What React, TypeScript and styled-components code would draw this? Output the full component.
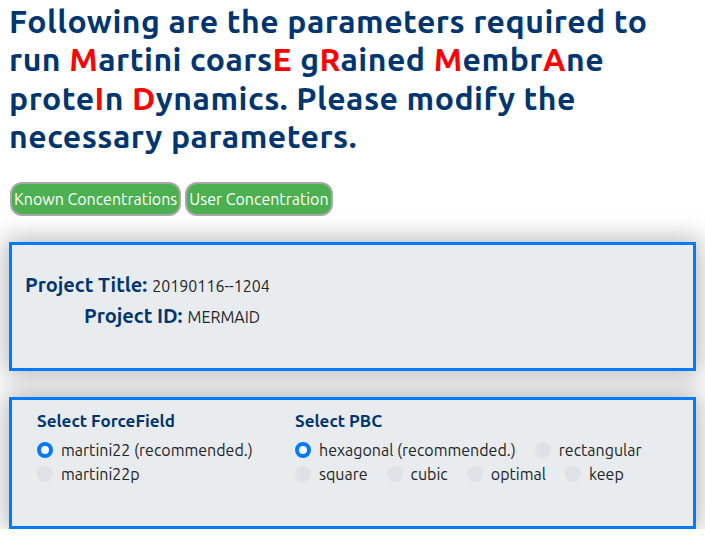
import React from "react";
import styled, { createGlobalStyle } from "styled-components";

const Global = createGlobalStyle`
  html, body { margin: 0; padding: 0; background: #fff; }
  body { font-family: Ubuntu, "Open Sans", "DejaVu Sans", sans-serif; color: #212529; }
`;

const Page = styled.div`
  padding: 2px 9px 0 9px;
  width: 705px;
  box-sizing: border-box;
`;

const Heading = styled.h1`
  margin: 0;
  font-size: 32px;
  line-height: 38.4px;
  font-weight: 700;
  letter-spacing: 0.5px;
  color: #003670;
`;

const Red = styled.span`
  color: #ff0000;
`;

const ButtonRow = styled.div`
  display: flex;
  gap: 4px;
  margin: 26px 0 0 1px;
`;

const PillButton = styled.button`
  font-family: inherit;
  font-size: 16px;
  color: #fff;
  background: #4caf50;
  border: 2px solid #a8a8a8;
  border-radius: 12px;
  height: 34px;
  padding: 0 2px;
  line-height: 28px;
`;

const Card = styled.div<{ $h: number }>`
  box-sizing: border-box;
  height: ${(p) => p.$h}px;
  background: #e9ecef;
  border: 3px solid #007bff;
  box-shadow: 0 0 24px 4px rgba(0, 0, 0, 0.28);
`;

const Cards = styled.div`
  display: flex;
  flex-direction: column;
  gap: 26px;
  margin-top: 26px;
`;

const InfoCard = styled(Card)`
  padding: 28px 0 0 13px;
`;

const InfoRow = styled.div<{ $indent: number }>`
  padding-left: ${(p) => p.$indent}px;
  height: 31px;
  display: flex;
  align-items: baseline;
  gap: 5px;
`;

const InfoLabel = styled.span`
  font-size: 20px;
  font-weight: 700;
  color: #003670;
`;

const InfoValue = styled.span`
  font-size: 16px;
  color: #212529;
`;

const OptionsCard = styled(Card)`
  display: flex;
  padding: 10px 0 0 25px;
`;

const Column = styled.div<{ $w: number }>`
  width: ${(p) => p.$w}px;
`;

const GroupTitle = styled.div`
  font-size: 17px;
  font-weight: 700;
  color: #003670;
  line-height: 22px;
  margin-bottom: 6px;
`;

const RadioWrap = styled.div`
  display: flex;
  flex-wrap: wrap;
  column-gap: 19px;
`;

const RadioItem = styled.label`
  display: flex;
  align-items: center;
  gap: 8px;
  font-size: 16px;
  line-height: 24px;
  color: #212529;
`;

const Dot = styled.span<{ $on?: boolean }>`
  box-sizing: border-box;
  width: 16px;
  height: 16px;
  border-radius: 50%;
  background: ${(p) => (p.$on ? "#fff" : "#dee2e6")};
  border: ${(p) => (p.$on ? "4px solid #007bff" : "none")};
`;

const Radio = ({ label, on }: { label: string; on?: boolean }) => (
  <RadioItem>
    <Dot $on={on} />
    {label}
  </RadioItem>
);

export default function App() {
  return (
    <Page>
      <Global />
      <Heading>
        Following are the parameters required to run <Red>M</Red>artini coars
        <Red>E</Red> g<Red>R</Red>ained <Red>M</Red>embr<Red>A</Red>ne prote
        <Red>I</Red>n <Red>D</Red>ynamics. Please modify the necessary
        parameters.
      </Heading>
      <ButtonRow>
        <PillButton>Known Concentrations</PillButton>
        <PillButton>User Concentration</PillButton>
      </ButtonRow>
      <Cards>
        <InfoCard $h={129}>
          <InfoRow $indent={0}>
            <InfoLabel>Project Title:</InfoLabel>
            <InfoValue>20190116--1204</InfoValue>
          </InfoRow>
          <InfoRow $indent={59}>
            <InfoLabel>Project ID:</InfoLabel>
            <InfoValue>MERMAID</InfoValue>
          </InfoRow>
        </InfoCard>
        <OptionsCard $h={132}>
          <Column $w={258}>
            <GroupTitle>Select ForceField</GroupTitle>
            <RadioWrap>
              <Radio label="martini22 (recommended.)" on />
            </RadioWrap>
            <RadioWrap>
              <Radio label="martini22p" />
            </RadioWrap>
          </Column>
          <Column $w={395}>
            <GroupTitle>Select PBC</GroupTitle>
            <RadioWrap>
              <Radio label="hexagonal (recommended.)" on />
              <Radio label="rectangular" />
              <Radio label="square" />
              <Radio label="cubic" />
              <Radio label="optimal" />
              <Radio label="keep" />
            </RadioWrap>
          </Column>
        </OptionsCard>
      </Cards>
    </Page>
  );
}
